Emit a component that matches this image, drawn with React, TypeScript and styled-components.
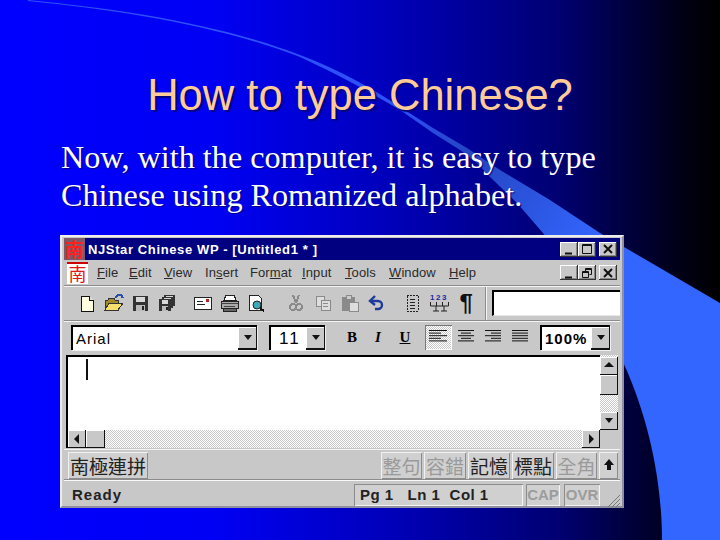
import React from "react";
import styled, { createGlobalStyle } from "styled-components";

const Global = createGlobalStyle`
  html, body { margin: 0; padding: 0; background: #000; }
  #root { width: 720px; height: 540px; overflow: hidden; }
`;

const Slide = styled.div`
  position: relative;
  width: 720px;
  height: 540px;
  overflow: hidden;
  box-sizing: border-box;
  padding: 72px 0 0 60px;
  background: linear-gradient(90deg, #0000ff 0%, #0000f4 30%, #0000b8 55%, #000070 78%, #000018 94%, #000 100%);
`;
const Swoosh = styled.svg`
  position: absolute;
  inset: 0;
`;
const Title = styled.h1`
  position: relative;
  width: 600px;
  margin: 0;
  font: 400 43.5px/46px "Liberation Sans", Arial, sans-serif;
  color: #ffcc99;
  text-align: center;
  text-shadow: 2px 2px 1px #000080;
`;
const Body = styled.p`
  position: relative;
  margin: 20px 0 0 1px;
  font: 400 32.2px/38px "Liberation Serif", "Times New Roman", serif;
  color: #fff;
  text-shadow: 1px 1px 1px #000080;
  white-space: pre;
`;

const Window = styled.div`
  position: relative;
  box-sizing: border-box;
  width: 564px;
  height: 273px;
  margin-top: 21px;
  padding: 1px 2px 0;
  background: #c8c8c8;
  border: 2px solid;
  border-color: #eeeeee #8f8f9f #8f8f9f #eeeeee;
  font-family: "Liberation Sans", Arial, sans-serif;
  color: #000;
`;
const TitleBar = styled.div`
  display: flex;
  align-items: center;
  height: 22px;
  background: #000080;
  color: #fff;
  font-weight: 700;
  font-size: 13px;
  letter-spacing: 0.62px;
  white-space: nowrap;
`;
const TitleIcon = styled.span`
  width: 21px;
  height: 22px;
  margin-right: 3px;
  background: #7d5a6a;
  color: #ff2020;
  text-align: center;
  font: 700 19px/22px "Noto Sans CJK TC", sans-serif;
`;
const CaptionGroup = styled.div`
  display: flex;
  margin-left: auto;
  margin-right: 3px;
`;
const CaptionButton = styled.span<{ $gap?: number }>`
  display: flex;
  align-items: center;
  justify-content: center;
  box-sizing: border-box;
  width: 18px;
  height: 15px;
  margin-left: ${(p) => p.$gap ?? 0}px;
  background: #c8c8c8;
  box-shadow: inset -1px -1px #333, inset 1px 1px #fff, inset -2px -2px #888;
`;
const MenuBar = styled.div`
  display: flex;
  align-items: center;
  height: 25px;
  font-size: 13px;
  color: #2a2a2a;
  white-space: nowrap;
`;
const MenuLogo = styled.span`
  box-sizing: border-box;
  width: 21px;
  height: 22px;
  margin: 0 9px 0 3px;
  background: #fff;
  border-top: 2px solid #c00;
  color: #e01818;
  text-align: center;
  font: 400 18px/19px "Noto Sans CJK TC", sans-serif;
`;
const MenuItem = styled.span<{ $w: number }>`
  width: ${(p) => p.$w}px;
  letter-spacing: 0.1px;
  flex: none;
`;
const ToolRow = styled.div<{ $h: number; $left: number }>`
  display: flex;
  align-items: center;
  box-sizing: border-box;
  height: ${(p) => p.$h}px;
  padding-left: ${(p) => p.$left}px;
  border-top: 1px solid #8c8c8c;
  box-shadow: inset 0 1px #f4f4f4;
`;
const ToolGroup = styled.div<{ $gap?: number }>`
  display: flex;
  margin-right: ${(p) => p.$gap ?? 0}px;
`;
const ToolIcon = styled.span`
  display: flex;
  align-items: center;
  justify-content: center;
  width: 26.7px;
  height: 22px;
  flex: none;
`;
const Pilcrow = styled.span`
  font: 700 24px/22px "Liberation Sans", Arial, sans-serif;
  color: #111;
`;
const Divider = styled.span`
  width: 1px;
  height: 33px;
  margin: 0 6px 0 5px;
  background: #8c8c8c;
  box-shadow: 1px 0 #f4f4f4;
`;
const SearchBox = styled.span`
  box-sizing: border-box;
  flex: 1;
  height: 26px;
  margin-top: -1px;
  background: #fff;
  border-top: 2px solid #000;
  border-left: 2px solid #000;
  border-bottom: 1px solid #e8e8e8;
`;
const Combo = styled.span<{ $w: number; $gap: number }>`
  display: flex;
  align-items: center;
  justify-content: space-between;
  box-sizing: border-box;
  width: ${(p) => p.$w}px;
  height: 25px;
  margin-right: ${(p) => p.$gap}px;
  padding-left: 3px;
  background: #fff;
  border-top: 2px solid #000;
  border-left: 2px solid #000;
  box-shadow: 1px 1px #f0f0f0;
  font-size: 15px;
  letter-spacing: 1px;
  flex: none;
`;
const ComboValue = styled.span<{ $bold?: boolean }>`
  font-weight: ${(p) => (p.$bold ? 700 : 400)};
  margin-top: 1px;
`;
const SizeValue = styled(ComboValue)`
  font-size: 17px;
  letter-spacing: 2px;
  padding-left: 5px;
`;
const DropButton = styled.span`
  display: flex;
  align-items: center;
  justify-content: center;
  box-sizing: border-box;
  width: 19px;
  height: 23px;
  background: #c8c8c8;
  box-shadow: inset -1px -2px #111, inset 1px 1px #fff;
  flex: none;
`;
const FormatLetter = styled.span<{ $w: number; $italic?: boolean; $under?: boolean }>`
  width: ${(p) => p.$w}px;
  text-align: center;
  font: 700 15px/20px "Liberation Serif", serif;
  font-style: ${(p) => (p.$italic ? "italic" : "normal")};
  text-decoration: ${(p) => (p.$under ? "underline" : "none")};
  flex: none;
`;
const AlignButton = styled.span<{ $active?: boolean; $gap?: number }>`
  display: flex;
  align-items: center;
  justify-content: center;
  width: 27px;
  height: 25px;
  margin-right: ${(p) => p.$gap ?? 0}px;
  flex: none;
  ${(p) =>
    p.$active
      ? "background: repeating-conic-gradient(#fff 0 25%, #c8c8c8 0 50%) 0 0/2px 2px; box-shadow: inset 1px 1px #777, inset -1px -1px #fff;"
      : ""}
`;
const EditorGrid = styled.div`
  display: grid;
  grid-template-columns: 1fr 18px;
  grid-template-rows: 75px 18px;
  height: 93px;
  margin: 2px 2px 0;
  background: #c8c8c8;
`;
const Editor = styled.div`
  position: relative;
  background: #fff;
  border-top: 2px solid #000;
  border-left: 2px solid #000;
`;
const Caret = styled.span`
  position: absolute;
  left: 18px;
  top: 2px;
  width: 2px;
  height: 21px;
  background: #111;
`;
const VScroll = styled.div`
  display: flex;
  flex-direction: column;
  padding-top: 2px;
  background: repeating-conic-gradient(#fff 0 25%, #c8c8c8 0 50%) 0 0/2px 2px;
`;
const ScrollButton = styled.span<{ $w?: number; $h?: number; $push?: boolean }>`
  display: flex;
  align-items: center;
  justify-content: center;
  box-sizing: border-box;
  width: ${(p) => p.$w ?? 18}px;
  height: ${(p) => p.$h ?? 18}px;
  ${(p) => (p.$push ? "margin-top: auto;" : "")}
  background: #c8c8c8;
  box-shadow: inset -1px -1px #111, inset 1px 1px #fff;
  flex: none;
`;
const HScroll = styled.div`
  display: flex;
  border-left: 2px solid #000;
  background: repeating-conic-gradient(#fff 0 25%, #c8c8c8 0 50%) 0 0/2px 2px;
`;
const ScrollEnd = styled.span`
  margin-left: auto;
  display: flex;
`;
const Corner = styled.div`
  background: #c8c8c8;
`;
const ImeBar = styled.div`
  display: flex;
  align-items: center;
  box-sizing: border-box;
  height: 31px;
  padding: 1px 2px 0 4px;
  margin-top: 1px;
  border-top: 1px solid #f4f4f4;
  border-bottom: 1px solid #8c8c8c;
`;
const ImeButton = styled.span<{ $w: number; $off?: boolean; $gap?: number }>`
  display: flex;
  align-items: center;
  justify-content: center;
  box-sizing: border-box;
  width: ${(p) => p.$w}px;
  height: 27px;
  margin-right: ${(p) => p.$gap ?? 2}px;
  color: ${(p) => (p.$off ? "#9a9a9a" : "#222")};
  font: 400 19px/27px "Noto Sans CJK TC", sans-serif;
  background: #d0d0d0;
  box-shadow: inset 1px 1px #f0f0f0, inset -1px -1px #8c8c8c;
  flex: none;
  white-space: nowrap;
`;
const ImeSpacer = styled.span`
  flex: 1;
`;
const StatusBar = styled.div`
  display: flex;
  align-items: center;
  height: 27px;
  border-top: 1px solid #f8f8f8;
  padding-left: 8px;
  font-size: 15px;
  font-weight: 700;
  letter-spacing: 1px;
  color: #222;
`;
const Ready = styled.span`
  flex: 1;
`;
const Panel = styled.span<{ $w: number; $off?: boolean; $gap?: number; $pad?: number }>`
  display: flex;
  align-items: center;
  justify-content: ${(p) => (p.$off ? "center" : "flex-start")};
  box-sizing: border-box;
  width: ${(p) => p.$w}px;
  height: 22px;
  margin-right: ${(p) => p.$gap ?? 3}px;
  padding-left: ${(p) => p.$pad ?? 0}px;
  color: ${(p) => (p.$off ? "#9c9c9c" : "#222")};
  background: #d0d0d0;
  box-shadow: inset 1px 1px #8c8c8c, inset -1px -1px #f4f4f4;
  letter-spacing: ${(p) => (p.$off ? 0 : 0.48)}px;
  white-space: pre;
  flex: none;
`;
const Grip = styled.svg`
  align-self: flex-end;
  margin-bottom: 1px;
`;

const Tri = ({ d }: { d: "u" | "d" | "l" | "r" }) => {
  const pts = { u: "1,7 11,7 6,2", d: "2,3 10,3 6,8", l: "8,1 8,11 3,6", r: "4,1 4,11 9,6" }[d];
  return (
    <svg width="12" height="12" viewBox="0 0 12 12">
      <polygon points={pts} fill="#111" />
    </svg>
  );
};

const Sym = ({ k }: { k: "min" | "max" | "close" | "restore" }) => (
  <svg width="14" height="12" viewBox="0 0 14 12" fill="none" stroke="#111">
    {k === "min" && <path d="M3 10.5h7" strokeWidth="2" />}
    {k === "max" && <path d="M2.5 1.5h9v9h-9zM2.5 2.5h9" />}
    {k === "close" && <path d="M3 2l8 8M11 2l-8 8" strokeWidth="2" />}
    {k === "restore" && <path d="M5.5 1.5h6v6h-2M5.5 2.5h6M5.5 1.5v3M2.5 4.5h6v6h-6zM2.5 5.5h6" />}
  </svg>
);

const AlignIcon = ({ lines }: { lines: [number, number][] }) => (
  <svg width="20" height="16" viewBox="0 0 20 16" stroke="#111" strokeWidth="1">
    {lines.map(([x, w], i) => (
      <path key={i} d={`M${x} ${1.5 + i * 2.6}h${w}`} />
    ))}
  </svg>
);

const Ico = ({ children, w = 20 }: { children: React.ReactNode; w?: number }) => (
  <svg width={w} height="18" viewBox={`0 0 ${w} 18`} shapeRendering="crispEdges">
    {children}
  </svg>
);

const Floppy = ({ x = 0, y = 0, s = 14 }: { x?: number; y?: number; s?: number }) => (
  <g transform={`translate(${x} ${y}) scale(${s / 14})`}>
    <rect x="0" y="0" width="14" height="14" fill="#333" />
    <rect x="3" y="1" width="8" height="5" fill="#d8d8d8" />
    <rect x="3" y="8" width="8" height="6" fill="#bbb" />
    <rect x="8" y="9" width="2" height="4" fill="#222" />
  </g>
);

const icons: Record<string, React.ReactNode> = {
  new: (
    <Ico>
      <path d="M4 2h8l4 4v11H4z" fill="#fffde0" stroke="#111" />
      <path d="M12 2v4h4" fill="#ddd" stroke="#111" />
    </Ico>
  ),
  open: (
    <Ico>
      <path d="M1 6h3l1-2h5l1 2h3v10H1z" fill="#a08a2c" stroke="#333" />
      <path d="M1 16l4-7h14l-5 7z" fill="#f6e06a" stroke="#333" />
      <path d="M11 4l3-3 3 0 2 3" fill="none" stroke="#2a4fb0" strokeWidth="2" />
    </Ico>
  ),
  save: (
    <Ico>
      <Floppy x={2} y={2} s={15} />
    </Ico>
  ),
  saveAll: (
    <Ico>
      <Floppy x={7} y={1} s={11} />
      <Floppy x={5} y={3} s={11} />
      <Floppy x={2} y={5} s={12} />
    </Ico>
  ),
  mail: (
    <Ico>
      <rect x="1" y="3" width="17" height="12" fill="#fff" stroke="#222" />
      <rect x="13" y="5" width="3" height="3" fill="#b02020" />
      <path d="M4 7h6M4 10h8" stroke="#222" />
    </Ico>
  ),
  print: (
    <Ico>
      <path d="M6 1h8l2 5H4z" fill="#fff" stroke="#222" />
      <path d="M1 7h17v7H1z" fill="#aaa" stroke="#222" />
      <path d="M1 9h17M4 12h11" stroke="#444" />
      <path d="M3 14h13v3H3z" fill="#666" stroke="#222" />
    </Ico>
  ),
  preview: (
    <Ico>
      <path d="M3 1h9l3 3v12H3z" fill="#fff" stroke="#222" />
      <circle cx="11" cy="11" r="4" fill="#3ea8b8" stroke="#222" shapeRendering="auto" />
      <path d="M14 14l4 3" stroke="#111" strokeWidth="2" />
    </Ico>
  ),
  cut: (
    <Ico>
      <path d="M7 1l3 8M13 1l-3 8" stroke="#8a8a8a" strokeWidth="2" />
      <circle cx="7" cy="13" r="3" fill="none" stroke="#8a8a8a" strokeWidth="2" />
      <circle cx="13" cy="13" r="3" fill="none" stroke="#8a8a8a" strokeWidth="2" />
    </Ico>
  ),
  copy: (
    <Ico>
      <path d="M3 2h8v10H3z" fill="#ddd" stroke="#8a8a8a" />
      <path d="M8 6h9v10H8z" fill="#ddd" stroke="#8a8a8a" />
      <path d="M10 9h5M10 12h5" stroke="#8a8a8a" />
    </Ico>
  ),
  paste: (
    <Ico>
      <rect x="2" y="3" width="13" height="14" fill="#8a8a8a" />
      <rect x="6" y="1" width="5" height="4" fill="#ccc" stroke="#8a8a8a" />
      <path d="M9 8h9v9H9z" fill="#ddd" stroke="#8a8a8a" />
    </Ico>
  ),
  undo: (
    <svg width="20" height="18" viewBox="0 0 20 18" fill="none" stroke="#1c3a9c" strokeWidth="2.4">
      <path d="M6 7h6a4 4 0 0 1 0 8H9" />
      <path d="M9 2L4 7l5 4" />
    </svg>
  ),
  list: (
    <Ico>
      <rect x="4" y="1" width="11" height="16" fill="#c8c8c8" stroke="#222" strokeDasharray="2 1" />
      <path d="M7 5h5M7 8h5M7 11h5M7 14h5" stroke="#222" />
    </Ico>
  ),
  nums: (
    <svg width="24" height="20" viewBox="0 0 24 20">
      <text x="2" y="7" fontSize="8" fontWeight="700" fill="#1c2a9c" fontFamily="Liberation Sans" letterSpacing="1.5">
        123
      </text>
      <path d="M2.5 9v4h18V9M8.5 9v4M14.5 9v4M8 13v5M16 13v5M5 18h6M13 18h6" stroke="#222" fill="none" />
    </svg>
  ),
};

const menus: [React.ReactNode, number][] = [
  [<><u>F</u>ile</>, 32],
  [<><u>E</u>dit</>, 35],
  [<><u>V</u>iew</>, 41],
  [<>In<u>s</u>ert</>, 45],
  [<>For<u>m</u>at</>, 52],
  [<><u>I</u>nput</>, 43],
  [<><u>T</u>ools</>, 44],
  [<><u>W</u>indow</>, 60],
  [<><u>H</u>elp</>, 40],
];

export default function App() {
  return (
    <Slide>
      <Global />
      <Swoosh width="720" height="540" viewBox="0 0 720 540">
        <defs>
          <linearGradient id="sw" x1="400" y1="110" x2="600" y2="240" gradientUnits="userSpaceOnUse">
            <stop offset="0" stopColor="#2e50f8" />
            <stop offset="0.35" stopColor="#2444c0" />
            <stop offset="1" stopColor="#3366ff" />
          </linearGradient>
        </defs>
        <path
          d="M28 0 C120 9 220 24 300 55 C340 70 375 90 400 107 L433 128 L467 148 L500 170 L550 200 L600 233 L720 303 L720 540 L662 540 C662 490 652 425 623 362 C600 315 572 272 543 233 L517 203 L490 177 L477 163 L460 150 L433 133 L400 110 C370 92 335 73 300 57 C220 26 120 10 28 1 Z"
          fill="url(#sw)"
        />
      </Swoosh>
      <Title>How to type Chinese?</Title>
      <Body>{"Now, with the computer, it is easy to type\nChinese using Romanized alphabet."}</Body>
      <Window>
        <TitleBar>
          <TitleIcon>南</TitleIcon>
          NJStar Chinese WP - [Untitled1 * ]
          <CaptionGroup>
            <CaptionButton><Sym k="min" /></CaptionButton>
            <CaptionButton><Sym k="max" /></CaptionButton>
            <CaptionButton $gap={3}><Sym k="close" /></CaptionButton>
          </CaptionGroup>
        </TitleBar>
        <MenuBar>
          <MenuLogo>南</MenuLogo>
          {menus.map(([m, w], i) => (
            <MenuItem key={i} $w={w}>{m}</MenuItem>
          ))}
          <CaptionGroup>
            <CaptionButton><Sym k="min" /></CaptionButton>
            <CaptionButton><Sym k="restore" /></CaptionButton>
            <CaptionButton $gap={3}><Sym k="close" /></CaptionButton>
          </CaptionGroup>
        </MenuBar>
        <ToolRow $h={35} $left={10}>
          <ToolGroup $gap={9}>
            {["new", "open", "save", "saveAll"].map((k) => <ToolIcon key={k}>{icons[k]}</ToolIcon>)}
          </ToolGroup>
          <ToolGroup $gap={13}>
            {["mail", "print", "preview"].map((k) => <ToolIcon key={k}>{icons[k]}</ToolIcon>)}
          </ToolGroup>
          <ToolGroup $gap={10}>
            {["cut", "copy", "paste", "undo"].map((k) => <ToolIcon key={k}>{icons[k]}</ToolIcon>)}
          </ToolGroup>
          <ToolGroup>
            {["list", "nums"].map((k) => <ToolIcon key={k}>{icons[k]}</ToolIcon>)}
            <ToolIcon><Pilcrow>¶</Pilcrow></ToolIcon>
          </ToolGroup>
          <Divider />
          <SearchBox />
        </ToolRow>
        <ToolRow $h={33} $left={7}>
          <Combo $w={186} $gap={12}>
            <ComboValue>Arial</ComboValue>
            <DropButton><Tri d="d" /></DropButton>
          </Combo>
          <Combo $w={56} $gap={14}>
            <SizeValue>11</SizeValue>
            <DropButton><Tri d="d" /></DropButton>
          </Combo>
          <FormatLetter $w={26}>B</FormatLetter>
          <FormatLetter $w={26} $italic>I</FormatLetter>
          <FormatLetter $w={28} $under>U</FormatLetter>
          <ToolSpacer />
          <AlignButton $active>
            <AlignIcon lines={[[0, 18], [0, 12], [0, 18], [0, 12], [0, 18]]} />
          </AlignButton>
          <AlignButton>
            <AlignIcon lines={[[2, 16], [5, 10], [2, 16], [5, 10], [2, 16]]} />
          </AlignButton>
          <AlignButton>
            <AlignIcon lines={[[2, 16], [8, 10], [2, 16], [8, 10], [2, 16]]} />
          </AlignButton>
          <AlignButton $gap={7}>
            <AlignIcon lines={[[2, 16], [2, 16], [2, 16], [2, 16], [2, 16]]} />
          </AlignButton>
          <Combo $w={70} $gap={0}>
            <ComboValue $bold>100%</ComboValue>
            <DropButton><Tri d="d" /></DropButton>
          </Combo>
        </ToolRow>
        <EditorGrid>
          <Editor><Caret /></Editor>
          <VScroll>
            <ScrollButton><Tri d="u" /></ScrollButton>
            <ScrollButton $h={20} />
            <ScrollButton $push><Tri d="d" /></ScrollButton>
          </VScroll>
          <HScroll>
            <ScrollButton><Tri d="l" /></ScrollButton>
            <ScrollButton $w={19} />
            <ScrollEnd>
              <ScrollButton><Tri d="r" /></ScrollButton>
            </ScrollEnd>
          </HScroll>
          <Corner />
        </EditorGrid>
        <ImeBar>
          <ImeButton $w={80}>南極連拼</ImeButton>
          <ImeSpacer />
          <ImeButton $w={41} $off>整句</ImeButton>
          <ImeButton $w={42} $off>容錯</ImeButton>
          <ImeButton $w={42}>記憶</ImeButton>
          <ImeButton $w={42}>標點</ImeButton>
          <ImeButton $w={41} $off>全角</ImeButton>
          <ImeButton $w={19} $gap={0}>
            <svg width="12" height="14" viewBox="0 0 12 14">
              <polygon points="6,1 11,7 8,7 8,12 4,12 4,7 1,7" fill="#111" />
            </svg>
          </ImeButton>
        </ImeBar>
        <StatusBar>
          <Ready>Ready</Ready>
          <Panel $w={169} $pad={6}>{"Pg 1   Ln 1  Col 1"}</Panel>
          <Panel $w={34} $off $gap={4}>CAP</Panel>
          <Panel $w={36} $off $gap={6}>OVR</Panel>
          <Grip width="14" height="14" viewBox="0 0 14 14" stroke="#777">
            <path d="M2 14L14 2M6 14l8-8M10 14l4-4" />
          </Grip>
        </StatusBar>
      </Window>
    </Slide>
  );
}

const ToolSpacer = styled.span`
  width: 6px;
  flex: none;
`;
